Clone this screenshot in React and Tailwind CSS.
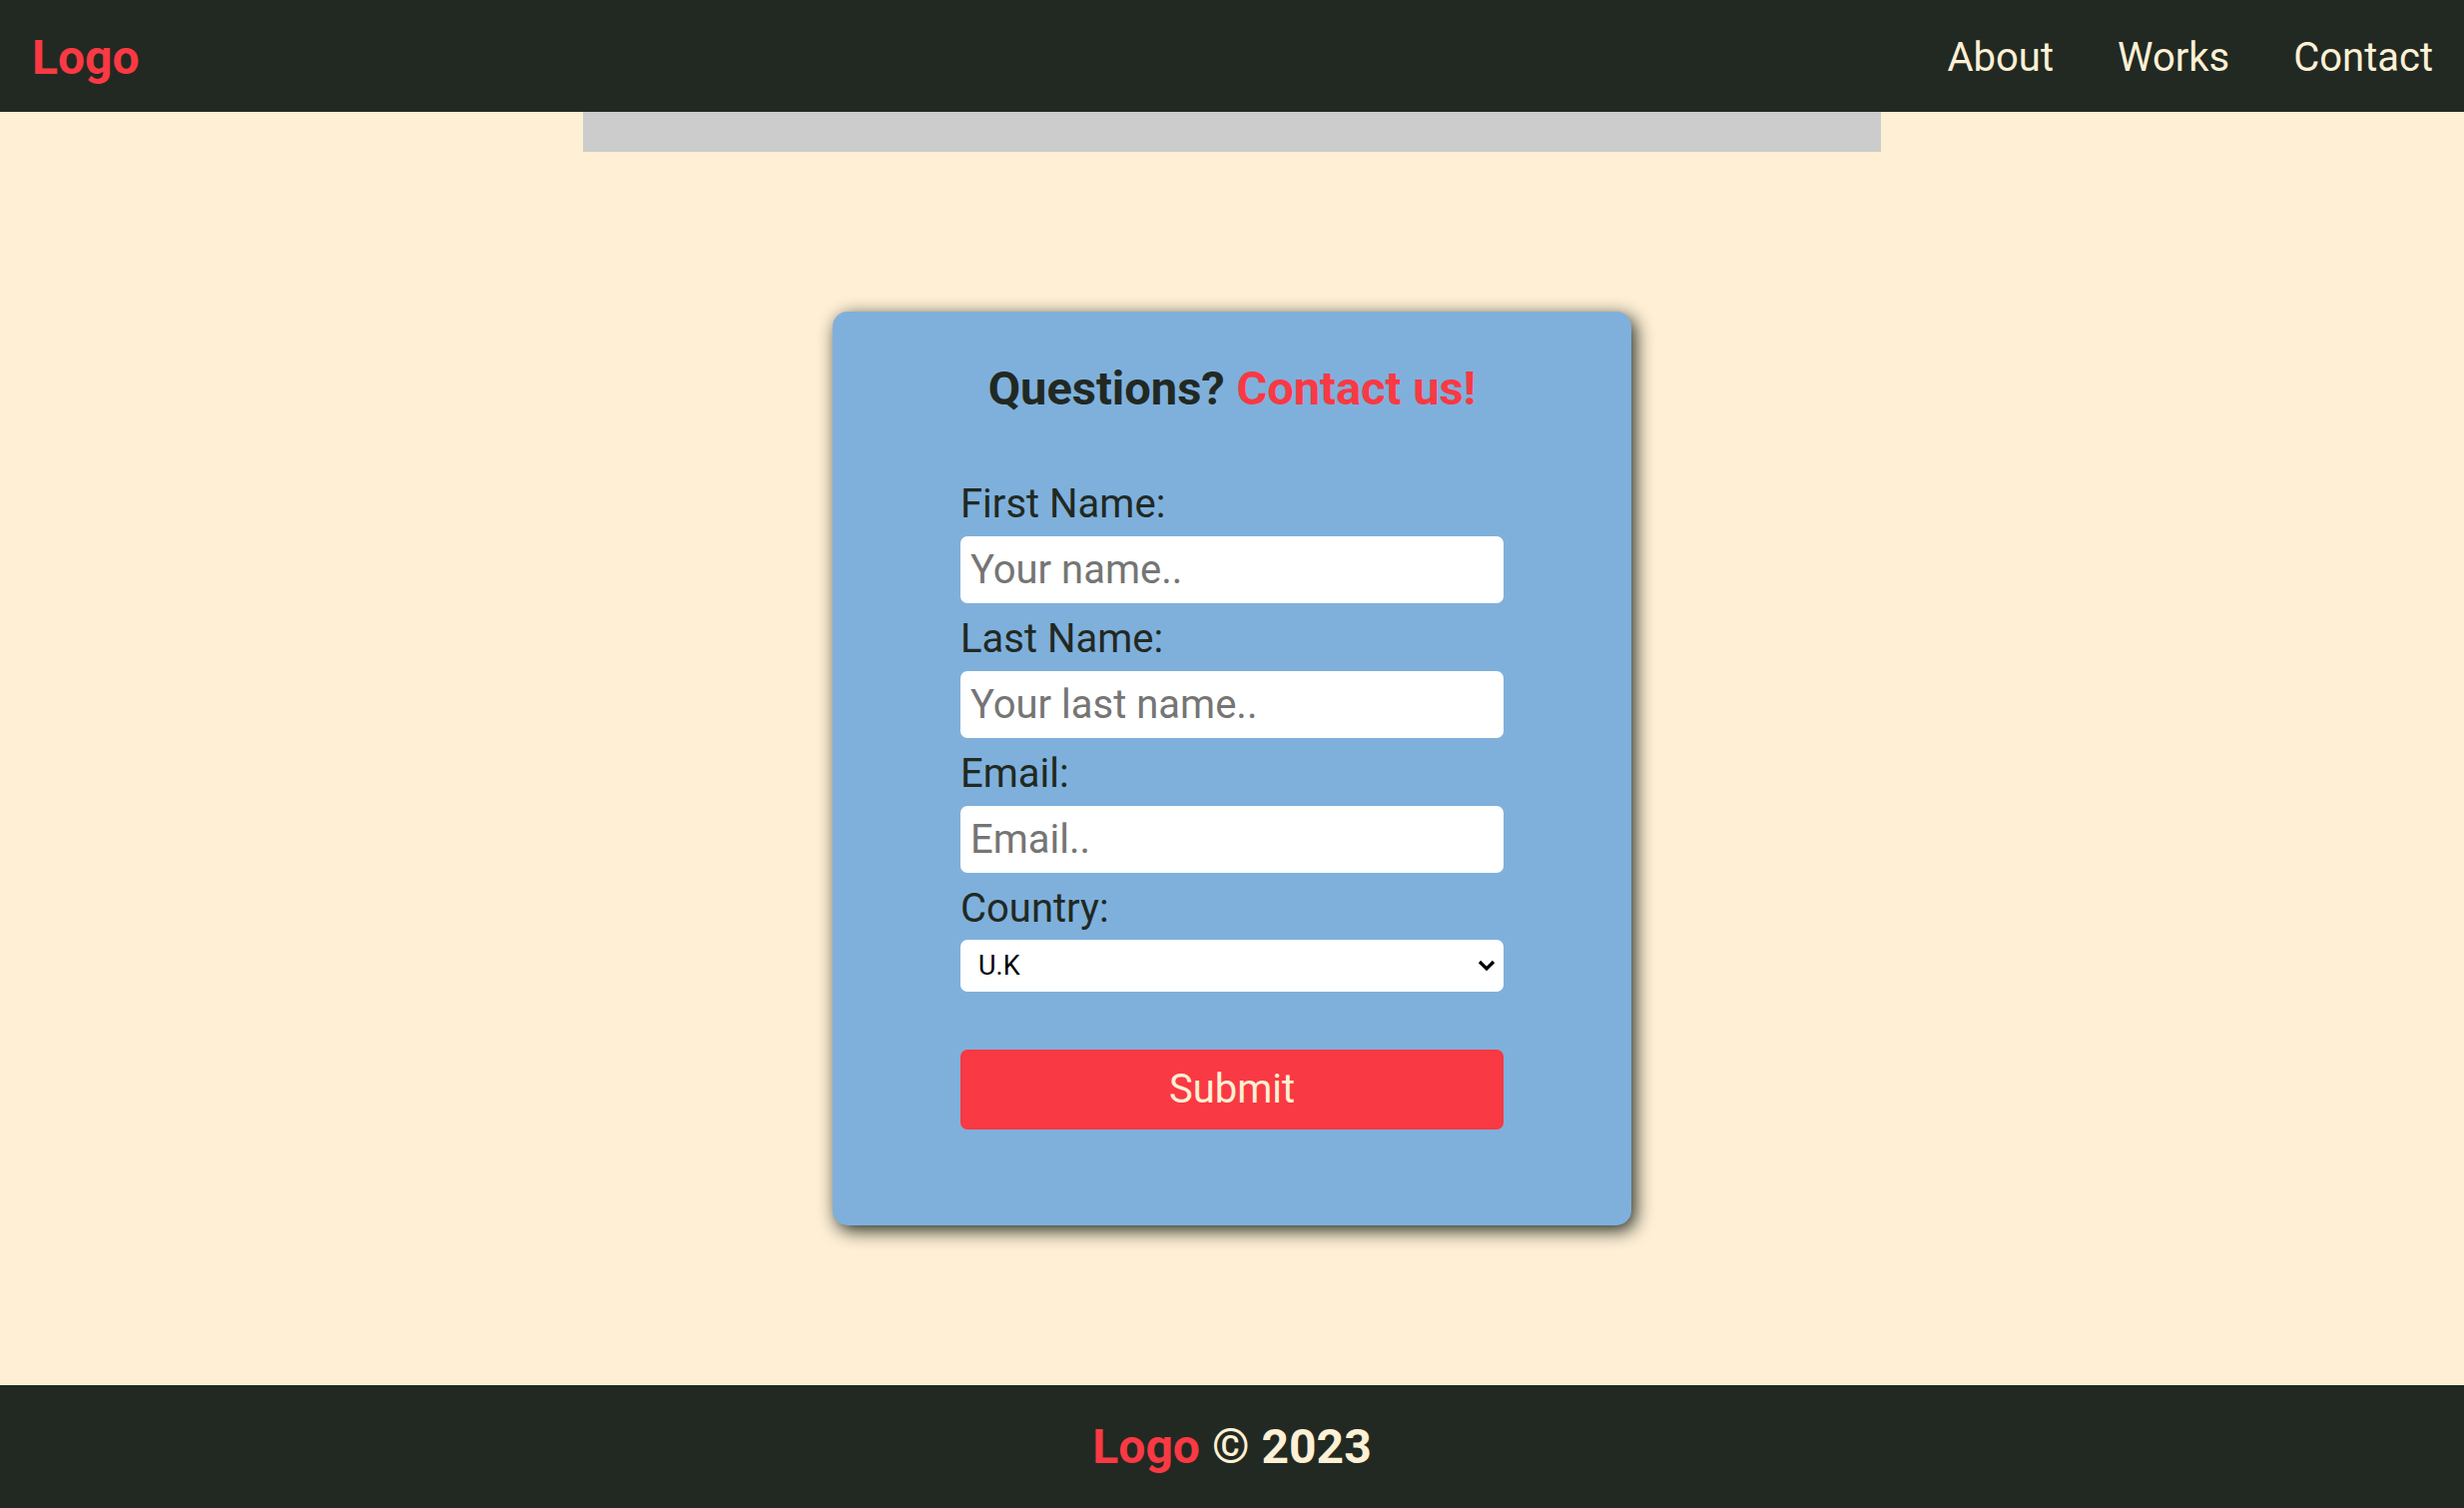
import React from 'react';

const Field = ({ label, placeholder }) => (
  <>
    <label className="block text-[40px] leading-[47px] text-[#212922]">{label}</label>
    <input
      type="text"
      placeholder={placeholder}
      className="mt-[9px] mb-[12px] block h-[67px] w-full rounded-[7px] bg-white px-[10px] text-[40px] text-[#212922] outline-none placeholder:text-[#757575]"
    />
  </>
);

const App = () => {
  return (
    <div className="flex h-screen flex-col overflow-hidden bg-[#feefd5] font-['Roboto',sans-serif]">
      <header className="flex h-[112px] shrink-0 items-center justify-between bg-[#212922] pl-8 pr-[31px] pt-[3px]">
        <a className="text-[48px] font-bold leading-none text-[#f93943]" href="#">Logo</a>
        <nav className="flex items-center gap-[64px] text-[40px] text-[#fdf0d5]">
          <a href="#">About</a>
          <a href="#">Works</a>
          <a href="#">Contact</a>
        </nav>
      </header>

      <main className="flex shrink-0 flex-col items-center">
        <div className="h-[40px] w-[1300px] bg-[#cccccc]" />

        <div className="my-[160px] h-[915px] w-[800px] rounded-[15px] bg-[#7fb0dc] px-[128px] pt-[50px] shadow-[4px_5px_18px_#212922]">
          <h2 className="text-center text-[47px] font-bold leading-[54px] text-[#212922]">
            Questions? <span className="text-[#f93943]">Contact us!</span>
          </h2>

          <form className="mt-[65px]" onSubmit={(e) => e.preventDefault()}>
            <Field label="First Name:" placeholder="Your name.." />
            <Field label="Last Name:" placeholder="Your last name.." />
            <Field label="Email:" placeholder="Email.." />
            <label className="block text-[40px] leading-[47px] text-[#212922]">Country:</label>
            <div className="relative mt-[8px]">
              <select className="block h-[52px] w-full appearance-none rounded-[7px] bg-white px-[18px] text-[27px] text-black outline-none">
                <option>U.K</option>
                <option>U.S.A</option>
                <option>France</option>
              </select>
              <svg
                className="pointer-events-none absolute right-[8px] top-[20px]"
                width="18"
                height="12"
                viewBox="0 0 18 12"
                fill="none"
              >
                <path d="M2 2l7 7 7-7" stroke="#000" strokeWidth="3.2" />
              </svg>
            </div>
            <button
              type="submit"
              className="mt-[58px] block h-[80px] w-full rounded-[7px] bg-[#f93943] text-[40px] text-[#fdf0d5]"
            >
              Submit
            </button>
          </form>
        </div>
      </main>

      <footer className="flex flex-1 items-center justify-center bg-[#212922] text-[48px] font-bold leading-[56px]">
        <span className="text-[#f93943]">Logo</span>
        <span className="ml-3 text-[#fdf0d5]">© 2023</span>
      </footer>
    </div>
  );
};

export default App;
